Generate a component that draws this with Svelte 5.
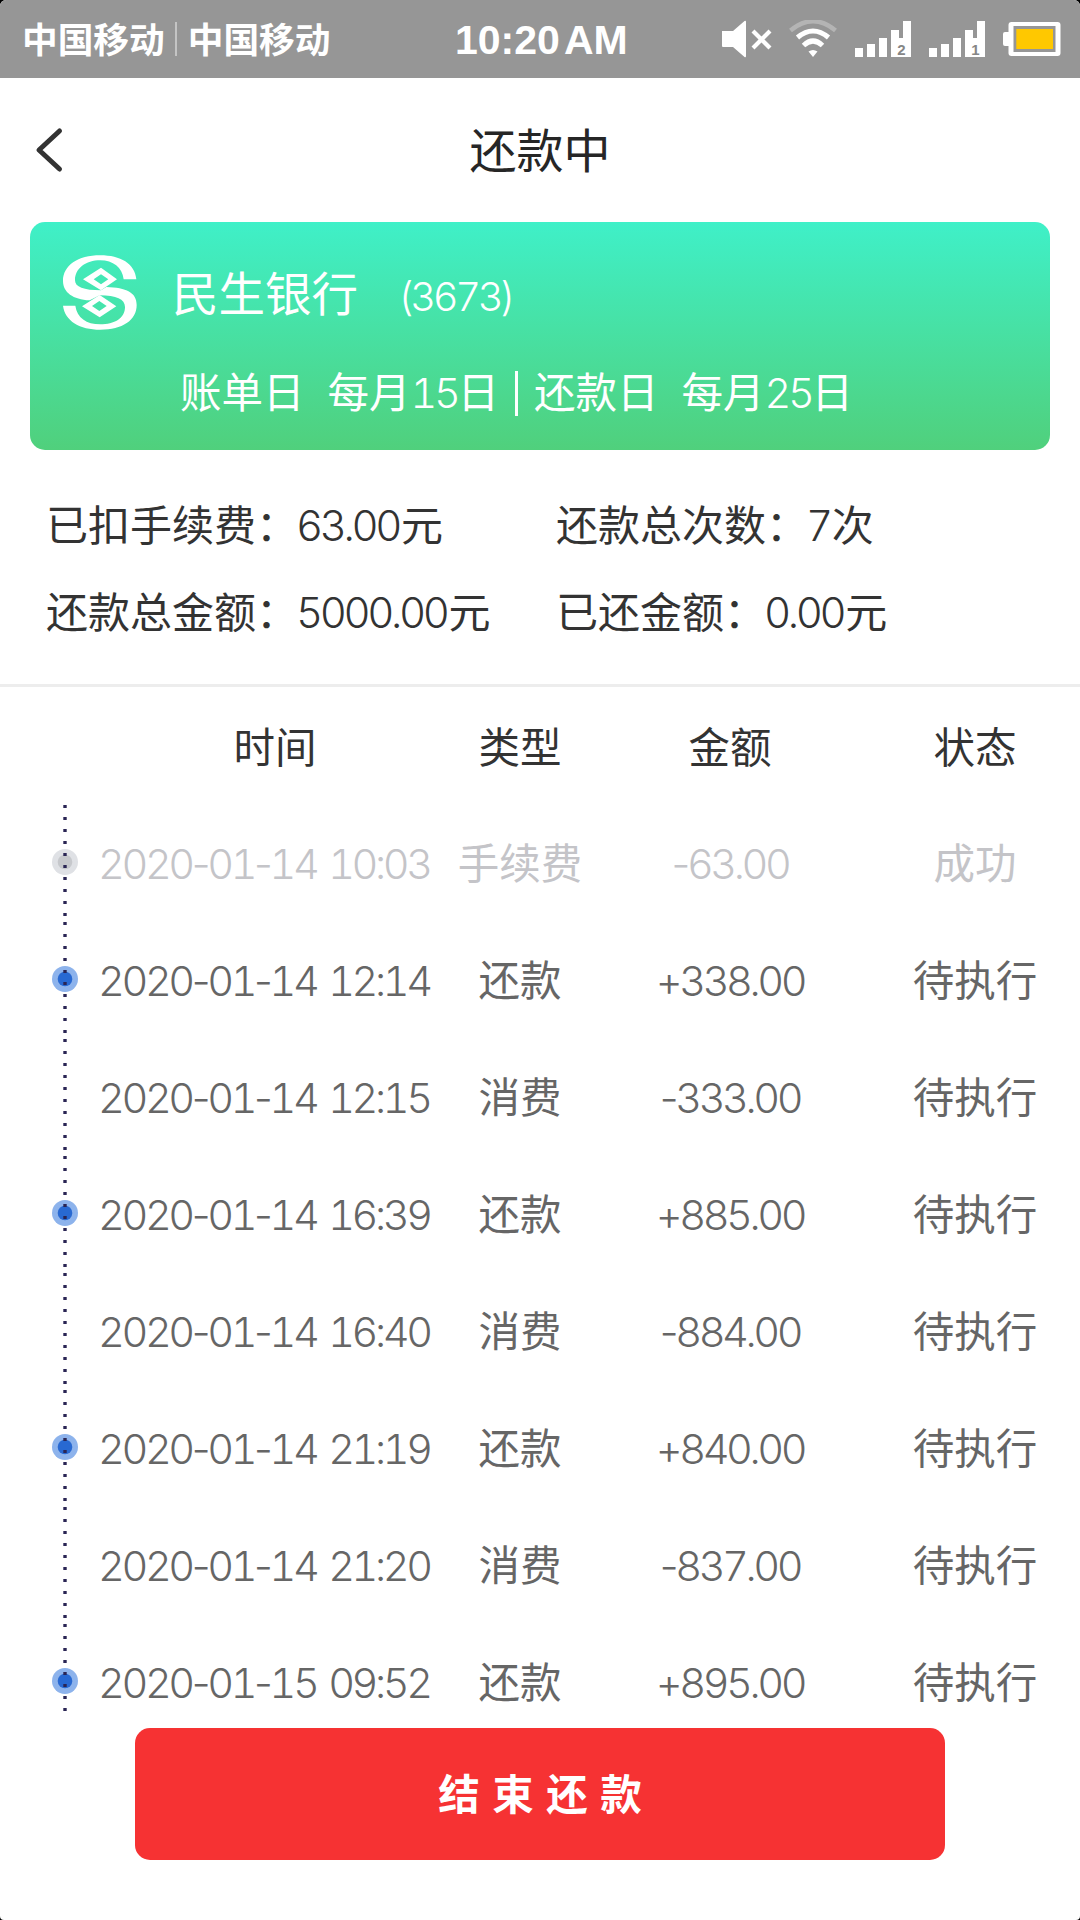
<script>
  const signals = [2, 1];
  const bars = [
    [0, 27],
    [12, 23],
    [24, 17],
    [36, 9],
    [48, 0]
  ];

  const summary = [
    { label: '已扣手续费：', value: '63.00', unit: '元' },
    { label: '还款总次数：', value: '7', unit: '次' },
    { label: '还款总金额：', value: '5000.00', unit: '元' },
    { label: '已还金额：', value: '0.00', unit: '元' }
  ];

  const rows = [
    { time: '2020-01-14 10:03', type: '手续费', amount: '-63.00', status: '成功', marker: true, done: true },
    { time: '2020-01-14 12:14', type: '还款', amount: '+338.00', status: '待执行', marker: true },
    { time: '2020-01-14 12:15', type: '消费', amount: '-333.00', status: '待执行' },
    { time: '2020-01-14 16:39', type: '还款', amount: '+885.00', status: '待执行', marker: true },
    { time: '2020-01-14 16:40', type: '消费', amount: '-884.00', status: '待执行' },
    { time: '2020-01-14 21:19', type: '还款', amount: '+840.00', status: '待执行', marker: true },
    { time: '2020-01-14 21:20', type: '消费', amount: '-837.00', status: '待执行' },
    { time: '2020-01-15 09:52', type: '还款', amount: '+895.00', status: '待执行', marker: true }
  ];
  const dots = Array.from({ length: 10 }, (_, i) => i * 12);
</script>

<!-- Tabular digits with proportional hyphens -->
{#snippet figures(text)}
  {#each text.split('-') as part, i}{#if i > 0}<span class="dash">-</span>{/if}{part}{/each}
{/snippet}

<div class="page">
  <div class="statusbar">
    <div class="carriers">
      <span>中国移动</span>
      <i></i>
      <span>中国移动</span>
    </div>
    <div class="clock"><span>10:20</span><span>AM</span></div>
    <div class="icons">
      <svg class="mute" width="50" height="38" viewBox="0 0 50 38">
        <path d="M0 11h11L22.500 1Q24 0 24 2v34q0 2-1.500 1L11 27H1q-1 0-1-1z" fill="#fff" />
        <path d="M31 11l17 17M48 11L31 28" stroke="#fff" stroke-width="4.200" />
      </svg>
      <svg class="wifi" width="48" height="38" viewBox="0 0 48 38">
        <path d="M1.500 10.500Q24-8 46.500 10.500" fill="none" stroke="#b4b4b4" stroke-width="4.500" />
        <path d="M8.500 17.500Q24 4.500 39.500 17.500" fill="none" stroke="#fff" stroke-width="5" />
        <path d="M14.500 25.500Q24 16.500 33.500 25.500" fill="none" stroke="#fff" stroke-width="5" />
        <path d="M19.500 31.500q4.500-3 9 0L24 37z" fill="#fff" />
      </svg>
      {#each signals as n}
        <svg class="signal" width="56" height="36" viewBox="0 0 56 36">
          {#each bars as [x, y]}
            <rect {x} {y} width="8" height={36 - y} fill="#fff" />
          {/each}
          <rect x="40" y="17" width="12" height="19" fill="#fff" />
          <text x="46.500" y="34" text-anchor="middle">{n}</text>
        </svg>
      {/each}
      <svg class="battery" width="58" height="34" viewBox="0 0 58 34">
        <path d="M6 10H2Q0 10 0 12v10q0 2 2 2h4z" fill="#fff" />
        <rect x="5.500" width="52" height="34" rx="3" fill="#fff" />
        <rect x="10.500" y="4" width="42" height="26" fill="#969696" />
        <rect x="13.300" y="7" width="36.700" height="20" fill="#ffc800" />
      </svg>
    </div>
  </div>

  <header>
    <svg width="30" height="46" viewBox="0 0 30 46">
      <path d="M24.500 4L4 23l20.500 19" fill="none" stroke="#333" stroke-width="5" stroke-linecap="round" stroke-linejoin="round" />
    </svg>
    <h1>还款中</h1>
  </header>

  <section class="card">
    <div class="bank">
      <svg width="74" height="75" viewBox="0 0 222 225">
        <path
          fill="#fff"
          d="M220 73C216 26 172 1 112 1C44 1 0 32 0 78C0 112 30 134 80 136L110 121C160 122 186 132 186 156C186 190 154 208 112 208C70 208 42 188 37 152L0 152C6 198 50 224 112 224C178 224 221 196 221 150C221 112 190 98 130 96L114 106C62 106 36 96 36 76C36 40 68 16 112 16C150 16 178 38 182 73Z"
        />
        <path
          fill="#fff"
          fill-rule="evenodd"
          d="M114 38L162 73L114 106L60 73ZM114 58L92 73L114 88L136 73ZM110 120L160 154L110 187L57 154ZM109 138L87 153L109 168L131 153Z"
        />
      </svg>
      <span class="name">民生银行</span>
      <span class="tail num">(3673)</span>
    </div>
    <div class="dates">
      <span>账单日</span>
      <span>每月<b class="num">15</b>日</span>
      <i></i>
      <span>还款日</span>
      <span>每月<b class="num">25</b>日</span>
    </div>
  </section>

  <section class="summary">
    {#each summary as s}
      <div>{s.label}<b class="num">{s.value}</b>{s.unit}</div>
    {/each}
  </section>

  <section class="table">
    <div class="row head">
      <span></span>
      <span class="time">时间</span>
      <span>类型</span>
      <span>金额</span>
      <span>状态</span>
    </div>
    <div class="list">
      {#each rows as r}
        <div class="row" class:done={r.done}>
          <svg width="26" height="117" viewBox="0 0 26 117">
            {#if r.marker}
              <circle class="outer" cx="13" cy="57" r="13" />
              <circle class="inner" cx="13" cy="57" r="7.300" />
            {/if}
            {#each dots as y}
              <rect x="11.300" y={y} width="3.400" height="3" fill="#2a2554" />
            {/each}
          </svg>
          <span class="time num">{@render figures(r.time)}</span>
          <span class="cjk">{r.type}</span>
          <span class="num">{@render figures(r.amount)}</span>
          <span class="cjk">{r.status}</span>
        </div>
      {/each}
    </div>
  </section>

  <footer><button>结 束 还 款</button></footer>
</div>

<style>
  :global(body) {
    background: #000;
  }
  .page {
    width: 1080px;
    height: 1920px;
    overflow: hidden;
    display: flex;
    flex-direction: column;
    background: #fff;
    border-radius: 6px 6px 4px 4px;
    color: #333;
    font-family: 'Liberation Sans', 'Noto Sans CJK SC', sans-serif;
    font-size: 41.5px;
    line-height: 60px;
    white-space: nowrap;
  }
  svg {
    display: block;
    flex: none;
  }
  .num {
    font-family: Inter, 'Liberation Sans', sans-serif;
    font-weight: 300;
    font-feature-settings: 'tnum';
    letter-spacing: -3.4px;
    word-spacing: 4px;
  }
  .dash {
    font-feature-settings: 'tnum' 0;
  }
  .statusbar {
    flex: none;
    height: 78px;
    box-sizing: border-box;
    padding: 0 19px 0 22px;
    background: #969696;
    color: #fff;
    display: grid;
    grid-template-columns: 433px 1fr auto;
    align-items: center;
  }
  .carriers {
    display: flex;
    align-items: center;
    font-size: 35.7px;
    font-weight: 700;
  }
  .carriers span {
    padding-top: 4px;
  }
  .carriers i {
    width: 2px;
    height: 34px;
    margin: 0 11px 0 10px;
    background: #c4c4c4;
  }
  .clock {
    display: flex;
    gap: 4px;
    font-size: 41px;
    font-weight: 700;
    padding-top: 2px;
  }
  .icons {
    display: flex;
    align-items: center;
  }
  .wifi {
    margin-left: 17px;
  }
  .signal {
    margin-left: 18px;
  }
  .signal text {
    font-size: 15px;
    font-weight: 700;
    fill: #868686;
  }
  .battery {
    margin-left: 18px;
  }
  header {
    flex: none;
    height: 144px;
    display: grid;
    grid-template-columns: 1fr auto 1fr;
    align-items: center;
    padding: 0 35px;
  }
  h1 {
    margin: 0;
    padding-top: 4px;
    font-size: 47px;
    font-weight: 400;
    color: #262626;
  }
  .card {
    flex: none;
    height: 228px;
    box-sizing: border-box;
    margin: 0 30px;
    padding: 33px 33px 0;
    border-radius: 15px;
    background: linear-gradient(#3ff0c8, #50d07c);
    color: #fff;
  }
  .bank {
    display: flex;
    align-items: center;
    height: 75px;
  }
  .name {
    margin-left: 35px;
    padding-top: 4px;
    font-size: 46.5px;
  }
  .tail {
    margin-left: 40px;
    padding-top: 9px;
    font-size: 40px;
  }
  .dates {
    display: flex;
    align-items: center;
    margin: 33px 0 0 117px;
  }
  .dates span + span {
    margin-left: 23px;
  }
  .dates i {
    width: 3px;
    height: 45px;
    margin: 0 16px;
    background: #fff;
  }
  .summary {
    flex: none;
    height: 237px;
    box-sizing: border-box;
    padding: 46px 0 0 46px;
    display: grid;
    grid-template-columns: 510px 1fr;
    grid-auto-rows: 87px;
    font-size: 42px;
    border-bottom: 3px solid #ededed;
  }
  .summary .num {
    margin: 0 2px 0 -2px;
  }
  .table {
    flex: 1;
    display: flex;
    flex-direction: column;
    min-height: 0;
    overflow: hidden;
  }
  .row {
    flex: none;
    height: 117px;
    display: grid;
    grid-template-columns: 48px 350px 140px 280px 210px;
    padding-left: 52px;
    align-items: center;
    text-align: center;
    color: #666;
  }
  .cjk {
    padding-top: 3px;
  }
  .row .time {
    text-align: left;
    margin-left: -2px;
  }
  .row.head {
    height: 118px;
    box-sizing: border-box;
    padding-top: 5px;
    color: #333;
  }
  .row.head .time {
    text-align: center;
    margin-left: 0;
  }
  .list {
    flex: none;
    height: 907px;
    overflow: hidden;
  }
  .outer {
    fill: #8db3ec;
  }
  .inner {
    fill: #2869d2;
  }
  .done {
    color: #c4c4c8;
  }
  .done .outer {
    fill: #dfe1e5;
  }
  .done .inner {
    fill: #c6c8cc;
  }
  footer {
    flex: none;
    height: 208px;
    box-sizing: border-box;
    padding: 16px 135px 60px;
    display: flex;
  }
  button {
    flex: 1;
    border: 0;
    padding: 0 0 5px;
    border-radius: 15px;
    background: #f63233;
    color: #fff;
    font: 700 41.5px 'Liberation Sans', 'Noto Sans CJK SC', sans-serif;
    word-spacing: 1px;
  }
</style>
